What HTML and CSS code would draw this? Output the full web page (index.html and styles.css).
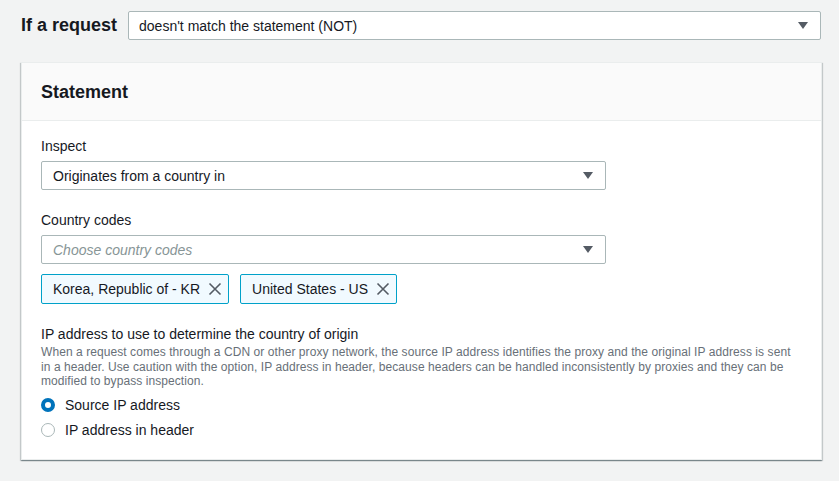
FILE: index.html
```html
<!DOCTYPE html>
<html lang="en">
<head>
<meta charset="utf-8">
<title>Statement</title>
<link rel="stylesheet" href="styles.css">
</head>
<body>
<div class="top-row">
  <span class="top-label">If a request</span>
  <div class="select select-wide">
    <span class="select-value">doesn't match the statement (NOT)</span>
    <svg class="caret" width="10" height="7" viewBox="0 0 10 7"><path d="M0 0h10L5 7z" fill="#545b64"/></svg>
  </div>
</div>

<section class="panel">
  <header class="panel-header"><h2>Statement</h2></header>
  <div class="panel-body">
    <div class="field">
      <label class="field-label">Inspect</label>
      <div class="select select-narrow">
        <span class="select-value">Originates from a country in</span>
        <svg class="caret" width="10" height="7" viewBox="0 0 10 7"><path d="M0 0h10L5 7z" fill="#545b64"/></svg>
      </div>
    </div>

    <div class="field">
      <label class="field-label">Country codes</label>
      <div class="select select-narrow">
        <span class="select-placeholder">Choose country codes</span>
        <svg class="caret" width="10" height="7" viewBox="0 0 10 7"><path d="M0 0h10L5 7z" fill="#545b64"/></svg>
      </div>
      <div class="tokens">
        <div class="token">
          <span>Korea, Republic of - KR</span>
          <svg class="dismiss" width="14" height="14" viewBox="0 0 14 14"><path d="M1.5 1.5l11 11M12.5 1.5l-11 11" stroke="#545b64" stroke-width="1.6" fill="none"/></svg>
        </div>
        <div class="token">
          <span>United States - US</span>
          <svg class="dismiss" width="14" height="14" viewBox="0 0 14 14"><path d="M1.5 1.5l11 11M12.5 1.5l-11 11" stroke="#545b64" stroke-width="1.6" fill="none"/></svg>
        </div>
      </div>
    </div>

    <div class="field field-last">
      <label class="field-label">IP address to use to determine the country of origin</label>
      <p class="description">When a request comes through a CDN or other proxy network, the source IP address identifies the proxy and the original IP address is sent in a header. Use caution with the option, IP address in header, because headers can be handled inconsistently by proxies and they can be modified to bypass inspection.</p>
      <div class="radios">
        <div class="radio-row"><span class="radio checked"></span><span>Source IP address</span></div>
        <div class="radio-row"><span class="radio"></span><span>IP address in header</span></div>
      </div>
    </div>
  </div>
</section>
</body>
</html>
```

FILE: styles.css
```css
* { box-sizing: border-box; }
html, body { margin: 0; padding: 0; }
body {
  background: #f2f3f3;
  font-family: "Liberation Sans", Arial, sans-serif;
  color: #16191f;
  font-size: 14px;
  width: 839px;
  height: 481px;
  overflow: hidden;
}
.top-row {
  display: flex;
  align-items: center;
  gap: 11px;
  padding: 11px 18px 0 21px;
}
.top-label {
  font-size: 18px;
  font-weight: bold;
  line-height: 29px;
  white-space: nowrap;
}
.select {
  display: flex;
  align-items: center;
  justify-content: space-between;
  height: 29px;
  background: #fff;
  border: 1px solid #aab7b8;
  border-radius: 2px;
  padding: 0 12px 0 10px;
  font-size: 14px;
}
.select-wide { flex: 1; }
.select-narrow { width: 565px; padding-left: 11px; }
.select-value { color: #16191f; }
.select-placeholder { color: #879596; font-style: italic; }
.caret { flex: none; }

.panel {
  margin: 22px 0 0 21px;
  width: 801px;
  background: #fff;
  border: 1px solid #eaeded;
  box-shadow: 0 1px 1px 0 rgba(0, 28, 36, 0.3), 1px 1px 1px 0 rgba(0, 28, 36, 0.15), -1px 1px 1px 0 rgba(0, 28, 36, 0.15);
}
.panel-header {
  height: 58px;
  background: #fafafa;
  border-bottom: 1px solid #eaeded;
  display: flex;
  align-items: center;
  padding: 0 19px;
}
.panel-header h2 {
  margin: 0;
  font-size: 18px;
  font-weight: bold;
  line-height: 22px;
}
.panel-body {
  padding: 14px 19px 16px;
}
.field { margin-bottom: 19px; }
.field-last { margin-bottom: 0; }
.field-label {
  display: block;
  line-height: 22px;
  margin-bottom: 4px;
}
.field-last .field-label { margin-bottom: 0; }
.tokens {
  display: flex;
  gap: 11px;
  margin-top: 10px;
}
.token {
  display: flex;
  align-items: center;
  height: 30px;
  padding: 0 6px 0 11px;
  gap: 8px;
  background: #f1faff;
  border: 1px solid #00a1c9;
  border-radius: 2px;
  line-height: 22px;
}
.dismiss { flex: none; }
.description {
  margin: 0;
  max-width: 758px;
  font-size: 12px;
  line-height: 14.5px;
  letter-spacing: 0.07px;
  color: #687078;
}
.radios {
  display: flex;
  flex-direction: column;
  margin-top: 4px;
}
.radio-row {
  display: flex;
  align-items: center;
  gap: 10px;
  height: 25px;
}
.radio {
  width: 14px;
  height: 14px;
  border-radius: 50%;
  border: 1px solid #aab7b8;
  background: #fff;
  flex: none;
}
.radio.checked {
  border: 4.5px solid #0073bb;
}
```
